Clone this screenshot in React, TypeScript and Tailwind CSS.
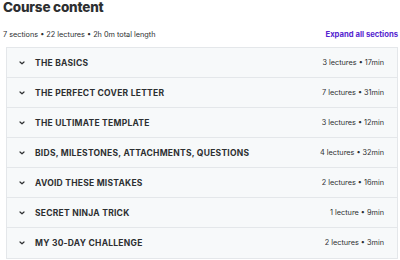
import React from "react";

const sections = [
  { title: "THE BASICS", meta: "3 lectures • 17min" },
  { title: "THE PERFECT COVER LETTER", meta: "7 lectures • 31min" },
  { title: "THE ULTIMATE TEMPLATE", meta: "3 lectures • 12min" },
  { title: "BIDS, MILESTONES, ATTACHMENTS, QUESTIONS", meta: "4 lectures • 32min" },
  { title: "AVOID THESE MISTAKES", meta: "2 lectures • 16min" },
  { title: "SECRET NINJA TRICK", meta: "1 lecture • 9min" },
  { title: "MY 30-DAY CHALLENGE", meta: "2 lectures • 3min" },
];

function Chevron() {
  return (
    <svg width="6" height="4" viewBox="0 0 6 4" className="shrink-0">
      <path d="M1 1 L3 2.8 L5 1" fill="none" stroke="#2d2f31" strokeWidth="1.2" strokeLinecap="round" strokeLinejoin="round" />
    </svg>
  );
}

export default function App() {
  return (
    <div
      className="w-[400px] h-[260px] bg-white text-[#2d2f31] overflow-hidden"
      style={{ fontFamily: "Inter, 'Liberation Sans', sans-serif" }}
    >
      <div className="pl-[3px] text-[13.5px] leading-[15px] font-extrabold tracking-[-0.2px]">Course content</div>
      <div className="flex items-center justify-between pl-[3px] pr-[2px] mt-[15px] h-[10px]">
        <span className="text-[7.3px] leading-[10px]">7 sections • 22 lectures • 2h 0m total length</span>
        <span className="text-[7.7px] leading-[10px] font-bold text-[#5624d0]">Expand all sections</span>
      </div>
      <div className="ml-[6px] mr-[2px] mt-[7px] border border-[#e4e7ea]">
        {sections.map((s, i) => (
          <div
            key={i}
            className={`flex items-center h-[30px] bg-[#f7f9fa] pl-[12px] pr-[13px] ${i < sections.length - 1 ? "border-b border-[#e4e7ea]" : ""}`}
          >
            <Chevron />
            <span className="ml-[10px] text-[8.5px] font-bold leading-[10px] tracking-[0.25px]">{s.title}</span>
            <span className="ml-auto text-[7.3px] leading-[10px]">{s.meta}</span>
          </div>
        ))}
      </div>
    </div>
  );
}
